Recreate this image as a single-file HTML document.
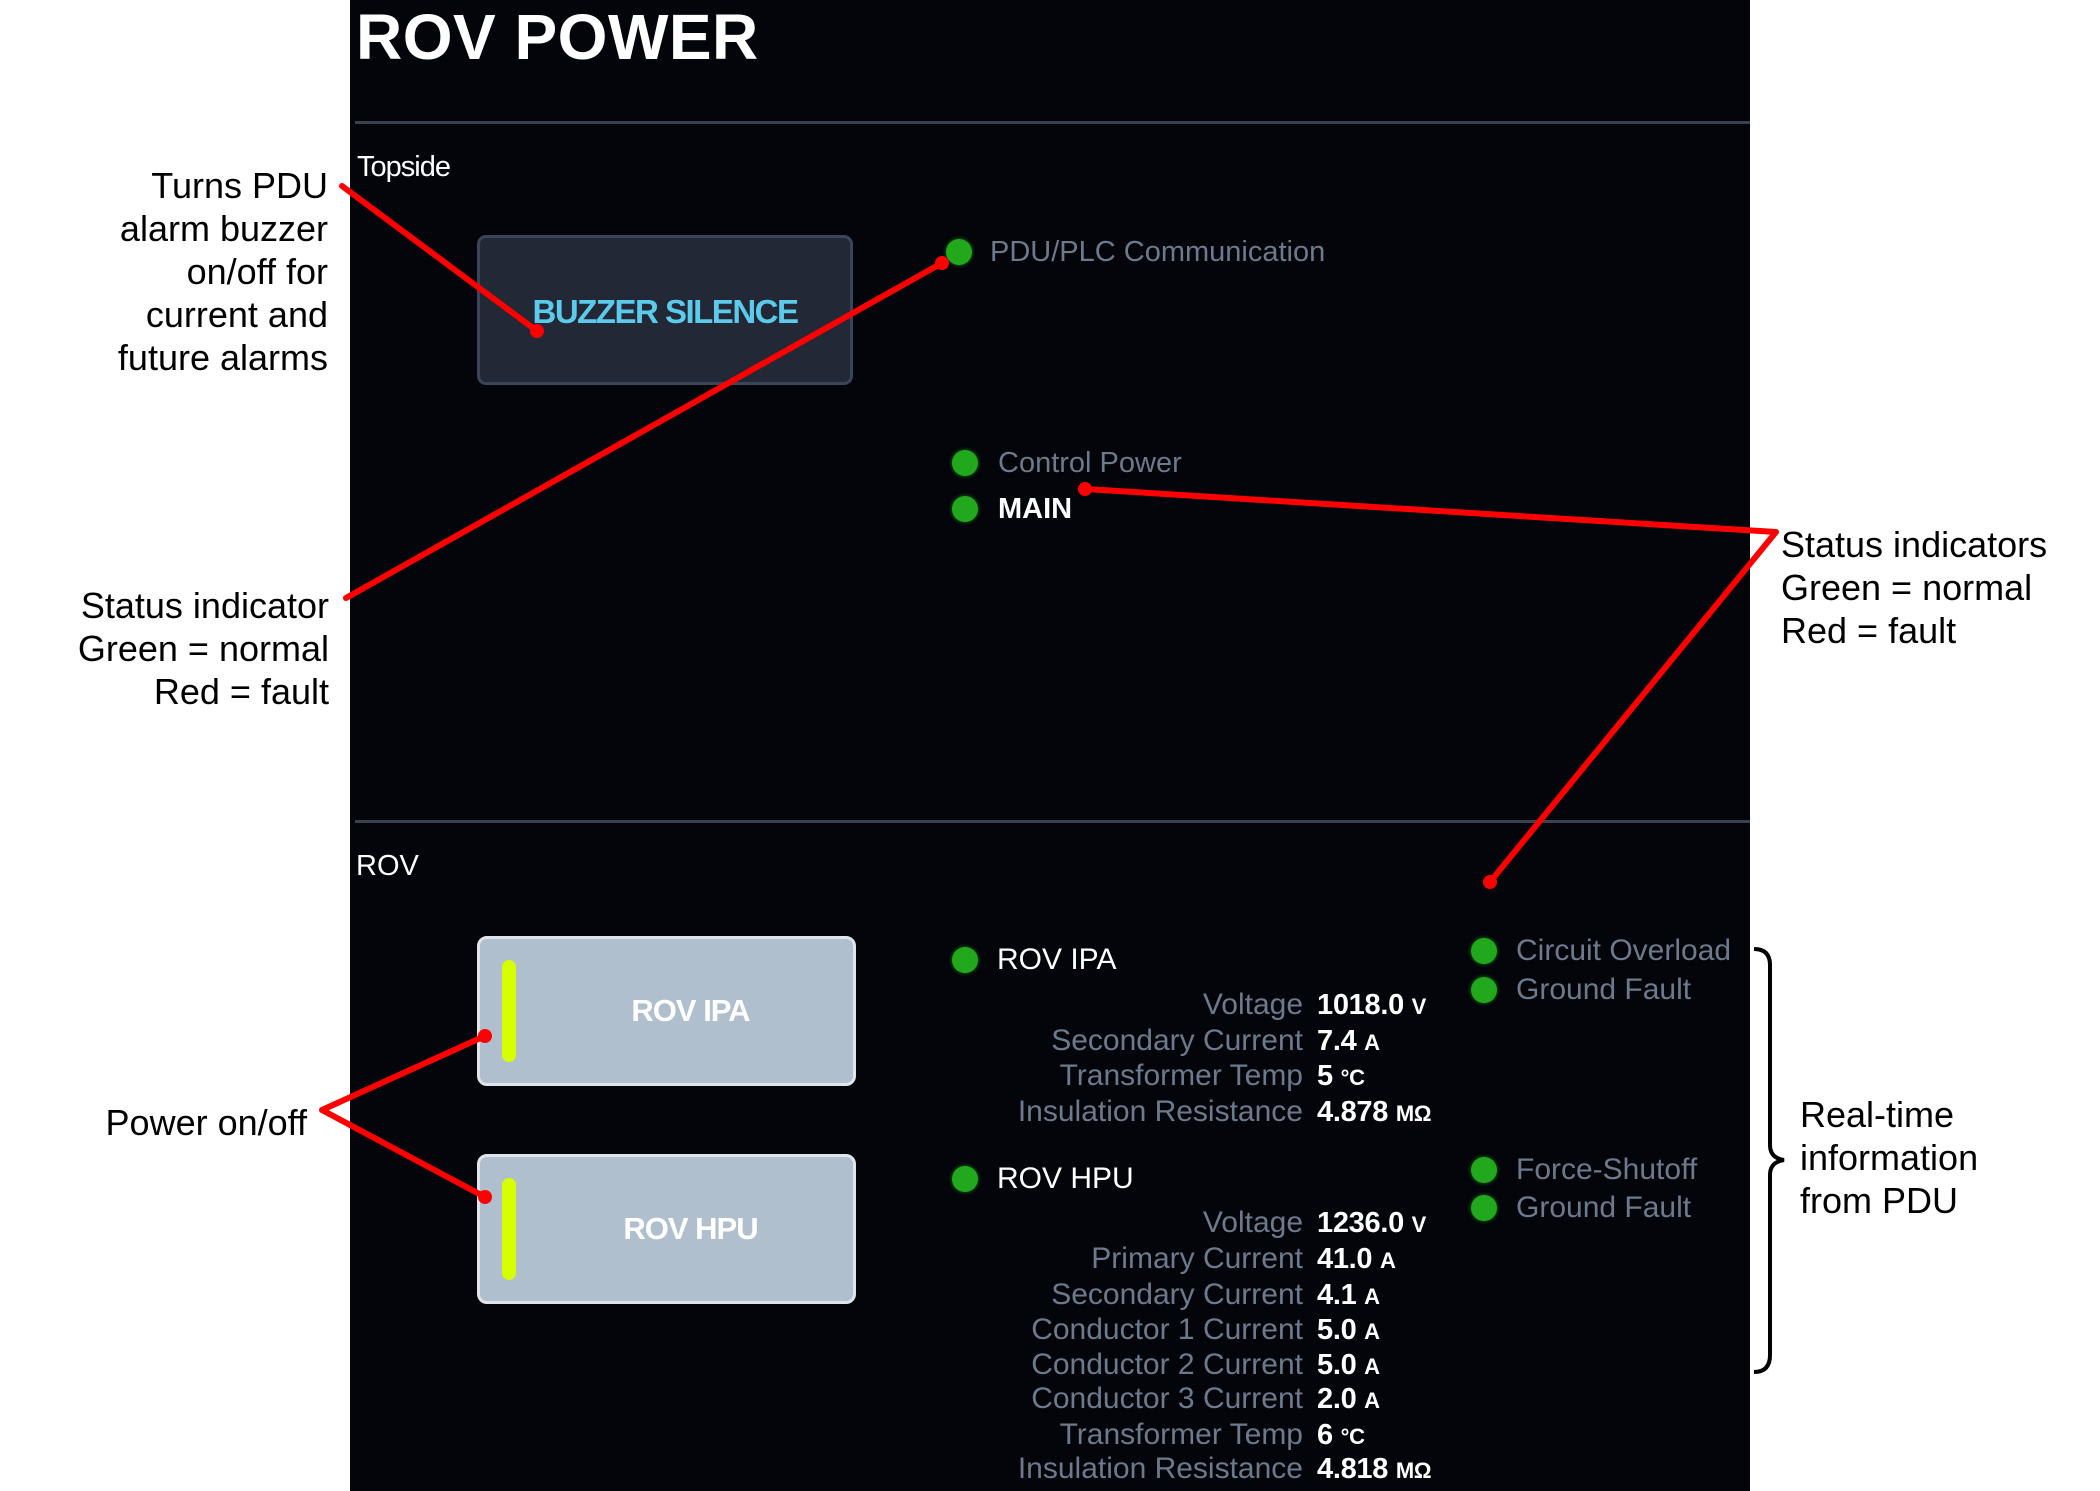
<!DOCTYPE html>
<html><head><meta charset="utf-8"><style>
*{margin:0;padding:0;box-sizing:border-box}
body{width:2100px;height:1491px;background:#fff;position:relative;overflow:hidden;font-family:"Liberation Sans",Arial,sans-serif}
.panel{position:absolute;left:350px;top:0;width:1400px;height:1491px;background:#03050a}
.a{position:absolute;white-space:nowrap}
.ann{position:absolute;color:#000;font-size:36px;line-height:43px}
.r{text-align:right}
.g{color:#6c7a8c;font-size:29px}
.w{color:#fff;font-size:29px;font-weight:bold}
.dot{position:absolute;width:26px;height:26px;border-radius:50%;background:#22a81c;box-shadow:0 0 4px #1a7a16}
.lab{position:absolute;right:797px;color:#6c7a8c;font-size:30px;line-height:34px;white-space:nowrap}
.val{position:absolute;left:1317px;color:#fff;font-size:29px;line-height:34px;font-weight:bold;white-space:nowrap;letter-spacing:-0.3px}
.val small{font-size:22px}
.btn{position:absolute;left:477px;width:379px;height:150px;border-radius:10px;background:#b0bfcd;border:3px solid #dfe5eb}
.bar{position:absolute;left:22px;top:21px;width:14px;height:102px;border-radius:7px;background:#d6ff00}
.bt{position:absolute;left:0;right:0;top:0;bottom:0;display:flex;align-items:center;justify-content:center;color:#fff;font-weight:bold;font-size:31px;letter-spacing:-1px;padding-left:48px}
</style></head><body>
<div class="panel"></div>
<div class="a" style="left:356px;top:2px;font-size:64px;font-weight:bold;color:#fff;line-height:70px;letter-spacing:0.5px">ROV POWER</div>
<div class="a" style="left:355px;top:121px;width:1395px;height:3px;background:#39424f"></div>
<div class="a" style="left:357px;top:150px;font-size:29px;color:#fff;line-height:34px;letter-spacing:-1px">Topside</div>
<div class="a" style="left:477px;top:235px;width:376px;height:150px;border-radius:9px;background:#222836;border:3px solid #3a4558"></div>
<div class="a" style="left:477px;top:292px;width:376px;text-align:center;font-size:33px;font-weight:bold;color:#5ccaea;letter-spacing:-1.5px;line-height:40px">BUZZER SILENCE</div>

<div class="dot" style="left:946px;top:239px"></div>
<div class="a g" style="left:990px;top:234px;line-height:36px">PDU/PLC Communication</div>
<div class="dot" style="left:952px;top:450px"></div>
<div class="a g" style="left:998px;top:445px;line-height:36px">Control Power</div>
<div class="dot" style="left:952px;top:496px"></div>
<div class="a w" style="left:998px;top:491px;line-height:36px">MAIN</div>

<div class="a" style="left:355px;top:820px;width:1395px;height:3px;background:#39424f"></div>
<div class="a" style="left:356px;top:848px;font-size:29px;color:#fff;line-height:36px">ROV</div>

<div class="btn" style="top:936px"><div class="bar"></div><div class="bt">ROV IPA</div></div>
<div class="btn" style="top:1154px"><div class="bar"></div><div class="bt">ROV HPU</div></div>

<div class="dot" style="left:952px;top:947px"></div>
<div class="a w" style="left:997px;top:942px;line-height:36px;font-weight:normal;font-size:30px">ROV IPA</div>
<div class="lab" style="top:988px">Voltage</div><div class="val" style="top:988px">1018.0 <small>V</small></div>
<div class="lab" style="top:1024px">Secondary Current</div><div class="val" style="top:1024px">7.4 <small>A</small></div>
<div class="lab" style="top:1059px">Transformer Temp</div><div class="val" style="top:1059px">5 <small>°C</small></div>
<div class="lab" style="top:1095px">Insulation Resistance</div><div class="val" style="top:1095px">4.878 <small>MΩ</small></div>

<div class="dot" style="left:952px;top:1166px"></div>
<div class="a w" style="left:997px;top:1161px;line-height:36px;font-weight:normal;font-size:30px">ROV HPU</div>
<div class="lab" style="top:1206px">Voltage</div><div class="val" style="top:1206px">1236.0 <small>V</small></div>
<div class="lab" style="top:1242px">Primary Current</div><div class="val" style="top:1242px">41.0 <small>A</small></div>
<div class="lab" style="top:1278px">Secondary Current</div><div class="val" style="top:1278px">4.1 <small>A</small></div>
<div class="lab" style="top:1313px">Conductor 1 Current</div><div class="val" style="top:1313px">5.0 <small>A</small></div>
<div class="lab" style="top:1348px">Conductor 2 Current</div><div class="val" style="top:1348px">5.0 <small>A</small></div>
<div class="lab" style="top:1382px">Conductor 3 Current</div><div class="val" style="top:1382px">2.0 <small>A</small></div>
<div class="lab" style="top:1418px">Transformer Temp</div><div class="val" style="top:1418px">6 <small>°C</small></div>
<div class="lab" style="top:1452px">Insulation Resistance</div><div class="val" style="top:1452px">4.818 <small>MΩ</small></div>

<div class="dot" style="left:1471px;top:938px"></div><div class="a g" style="left:1516px;top:933px;line-height:36px;font-size:30px">Circuit Overload</div>
<div class="dot" style="left:1471px;top:977px"></div><div class="a g" style="left:1516px;top:972px;line-height:36px;font-size:30px">Ground Fault</div>
<div class="dot" style="left:1471px;top:1157px"></div><div class="a g" style="left:1516px;top:1152px;line-height:36px;font-size:30px">Force-Shutoff</div>
<div class="dot" style="left:1471px;top:1195px"></div><div class="a g" style="left:1516px;top:1190px;line-height:36px;font-size:30px">Ground Fault</div>

<div class="ann r" style="right:1772px;top:164px">Turns PDU<br>alarm buzzer<br>on/off for<br>current and<br>future alarms</div>
<div class="ann r" style="right:1771px;top:584px">Status indicator<br>Green = normal<br>Red = fault</div>
<div class="ann r" style="right:1793px;top:1101px">Power on/off</div>
<div class="ann" style="left:1781px;top:523px">Status indicators<br>Green = normal<br>Red = fault</div>
<div class="ann" style="left:1800px;top:1093px">Real-time<br>information<br>from PDU</div>

<svg width="2100" height="1491" style="position:absolute;left:0;top:0">
<g stroke="#ff0000" stroke-width="6" fill="none" stroke-linecap="round" stroke-linejoin="round">
<line x1="342" y1="186" x2="537" y2="331"/>
<line x1="346" y1="598" x2="942" y2="263"/>
<polyline points="1085,489 1776,532 1490,882"/>
<polyline points="485,1036 322,1110 485,1197"/>
</g>
<g fill="#ff0000">
<circle cx="537" cy="331" r="7"/><circle cx="942" cy="263" r="7"/>
<circle cx="1085" cy="489" r="7"/><circle cx="1490" cy="882" r="7"/>
<circle cx="485" cy="1036" r="7"/><circle cx="485" cy="1197" r="7"/>
</g>
<path d="M1754,949 Q1770,949 1770,965 L1770,1145 Q1770,1158 1784,1160 Q1770,1162 1770,1175 L1770,1355 Q1770,1372 1754,1372" stroke="#000" stroke-width="4" fill="none"/>
</svg>
</body></html>
